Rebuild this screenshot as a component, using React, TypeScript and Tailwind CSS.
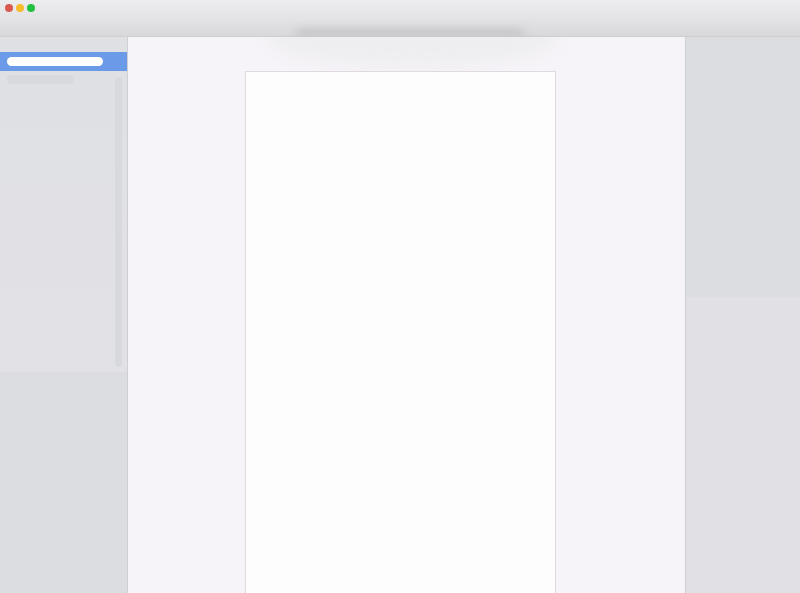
import React from 'react';

const App = () => {
    return (
        <div className="relative w-[800px] h-[593px] overflow-hidden flex flex-col bg-[#dcdde0]">
            {/* Title bar */}
            <div className="h-[37px] shrink-0 flex items-start gap-[3px] pl-[5px] pt-[4px] border-b border-[#d0cecf] bg-gradient-to-b from-[#edecee] via-[#e4e4e6] to-[#d8d7d9]">
                <span className="w-[8px] h-[8px] rounded-full bg-[#d9594f]" />
                <span className="w-[8px] h-[8px] rounded-full bg-[#f6bd2b]" />
                <span className="w-[8px] h-[8px] rounded-full bg-[#22c13f]" />
            </div>

            {/* Shadow of the toolbar sheet, lies over the title bar edge */}
            <div className="absolute left-[296px] top-[29px] w-[228px] h-[8px] rounded-full bg-[#c4c3c7] blur-[4px]" />

            <div className="flex flex-1 min-h-0">
                {/* Sidebar */}
                <div className="w-[128px] shrink-0 flex flex-col border-r border-[#cfcfd3]">
                    <div className="h-[335px] shrink-0 flex flex-col pt-[15px] bg-gradient-to-b from-[#dfe0e3] to-[#e2e2e6]">
                        <div className="h-[19px] shrink-0 flex items-center pl-[7px] bg-[#6a9ae8]">
                            <div className="w-[96px] h-[9px] rounded-full bg-white" />
                        </div>
                        <div className="flex justify-between pl-[7px] pr-[5px] pt-[4px]">
                            <div className="w-[67px] h-[9px] rounded-full bg-[#d8d9dc]" />
                            <div className="w-[7px] h-[290px] mt-[2px] rounded-full bg-[#d8d9dc]" />
                        </div>
                    </div>
                </div>

                {/* Document area */}
                <div className="relative flex-1 min-w-0 flex justify-center pt-[34px] pr-[12px] bg-[#f6f4f8] overflow-hidden">
                    <div className="absolute left-[140px] -top-[30px] w-[290px] h-[60px] rounded-[50%] bg-[#eeedf0] blur-[8px]" />
                    <div className="relative w-[311px] h-[600px] shrink-0 bg-[#fdfdfe] border border-[#e0d9df]" />
                </div>

                {/* Inspector */}
                <div className="w-[115px] shrink-0 flex flex-col border-l border-[#cfcfd3]">
                    <div className="h-[260px] shrink-0 bg-[#dcdde0]" />
                    <div className="flex-1 bg-[#e1e1e5]" />
                </div>
            </div>
        </div>
    );
};

export default App;
